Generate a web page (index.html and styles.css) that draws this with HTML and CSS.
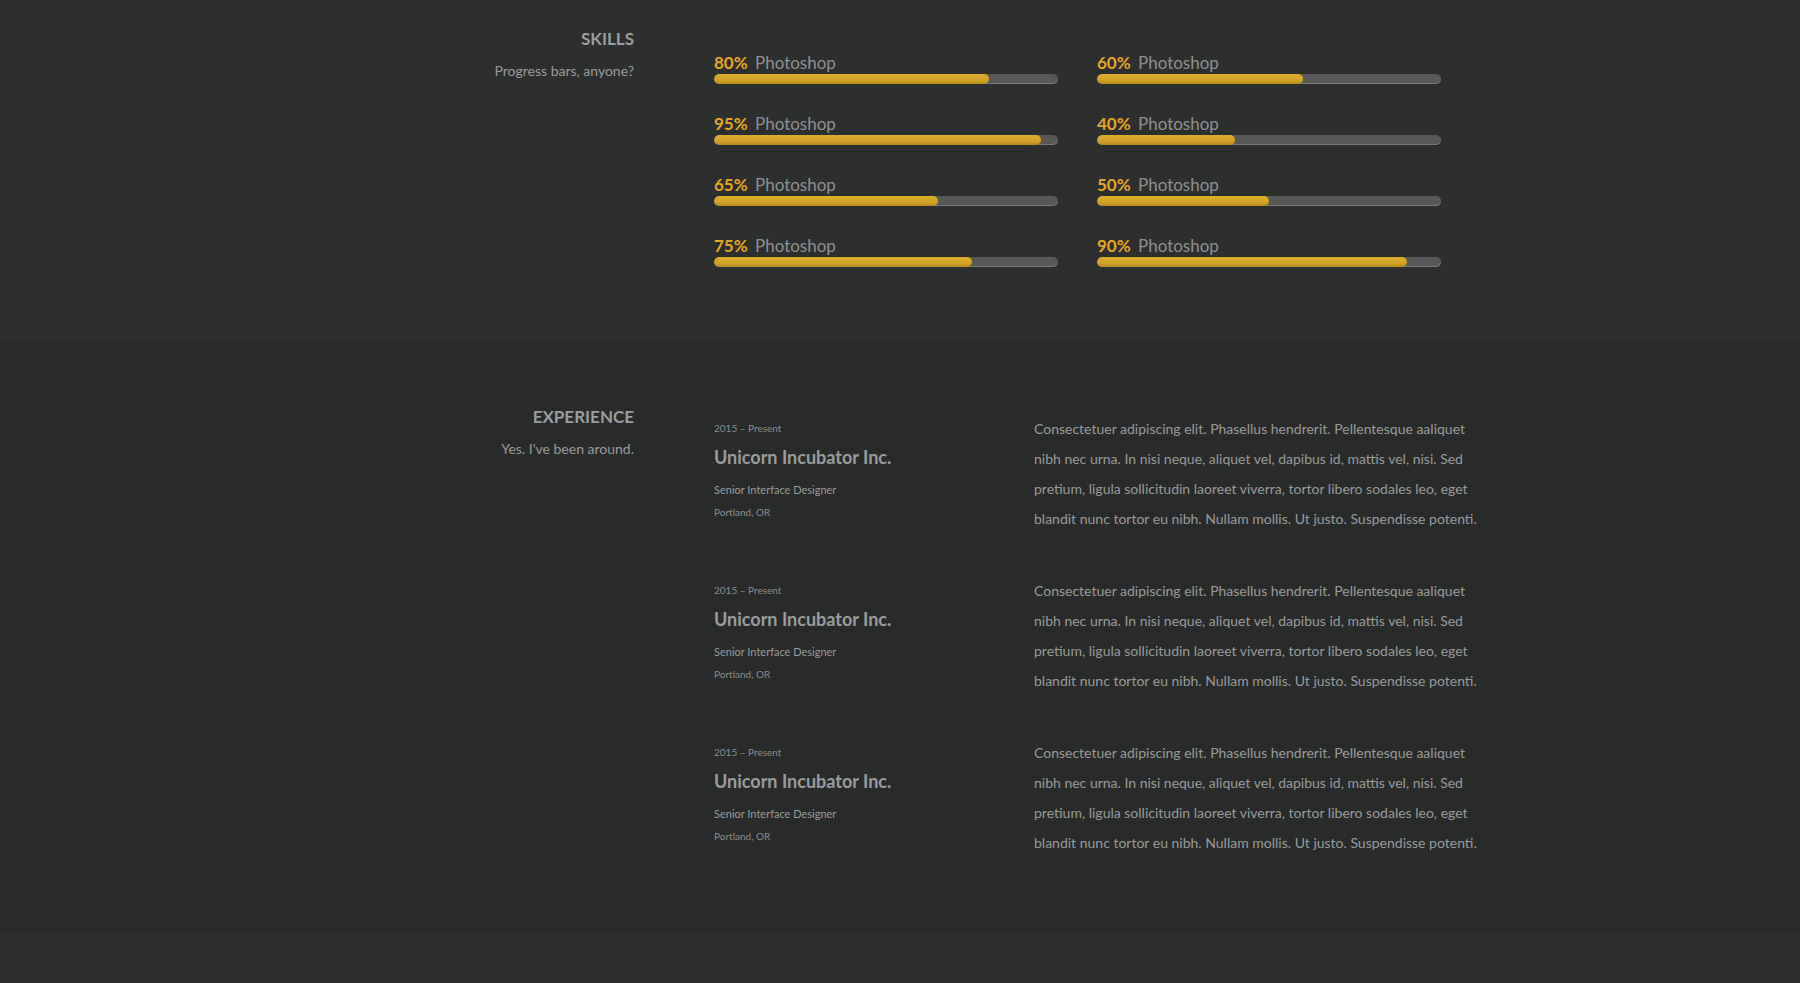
FILE: index.html
```html
<!DOCTYPE html>
<html>
<head>
<meta charset="utf-8">
<link rel="stylesheet" href="styles.css">
</head>
<body>
<section class="section skills">
  <div class="inner">
    <div class="side">
      <h2 class="side-title">SKILLS</h2>
      <p class="side-sub">Progress bars, anyone?</p>
    </div>
    <div class="main skill-grid">
      <div class="skill"><div class="skill-label"><span class="pct">80%</span> Photoshop</div><div class="track"><div class="fill" style="width:80%"></div></div></div>
      <div class="skill"><div class="skill-label"><span class="pct">60%</span> Photoshop</div><div class="track"><div class="fill" style="width:60%"></div></div></div>
      <div class="skill"><div class="skill-label"><span class="pct">95%</span> Photoshop</div><div class="track"><div class="fill" style="width:95%"></div></div></div>
      <div class="skill"><div class="skill-label"><span class="pct">40%</span> Photoshop</div><div class="track"><div class="fill" style="width:40%"></div></div></div>
      <div class="skill"><div class="skill-label"><span class="pct">65%</span> Photoshop</div><div class="track"><div class="fill" style="width:65%"></div></div></div>
      <div class="skill"><div class="skill-label"><span class="pct">50%</span> Photoshop</div><div class="track"><div class="fill" style="width:50%"></div></div></div>
      <div class="skill"><div class="skill-label"><span class="pct">75%</span> Photoshop</div><div class="track"><div class="fill" style="width:75%"></div></div></div>
      <div class="skill"><div class="skill-label"><span class="pct">90%</span> Photoshop</div><div class="track"><div class="fill" style="width:90%"></div></div></div>
    </div>
  </div>
</section>
<section class="section experience">
  <div class="inner">
    <div class="side">
      <h2 class="side-title">EXPERIENCE</h2>
      <p class="side-sub">Yes. I've been around.</p>
    </div>
    <div class="main jobs">
      <div class="job">
        <div class="job-meta">
          <div class="job-date">2015 – Present</div>
          <h3 class="job-company">Unicorn Incubator Inc.</h3>
          <div class="job-role">Senior Interface Designer</div>
          <div class="job-place">Portland, OR</div>
        </div>
        <p class="job-desc">Consectetuer adipiscing elit. Phasellus hendrerit. Pellentesque aaliquet nibh nec urna. In nisi neque, aliquet vel, dapibus id, mattis vel, nisi. Sed pretium, ligula sollicitudin laoreet viverra, tortor libero sodales leo, eget blandit nunc tortor eu nibh. Nullam mollis. Ut justo. Suspendisse potenti.</p>
      </div>
      <div class="job">
        <div class="job-meta">
          <div class="job-date">2015 – Present</div>
          <h3 class="job-company">Unicorn Incubator Inc.</h3>
          <div class="job-role">Senior Interface Designer</div>
          <div class="job-place">Portland, OR</div>
        </div>
        <p class="job-desc">Consectetuer adipiscing elit. Phasellus hendrerit. Pellentesque aaliquet nibh nec urna. In nisi neque, aliquet vel, dapibus id, mattis vel, nisi. Sed pretium, ligula sollicitudin laoreet viverra, tortor libero sodales leo, eget blandit nunc tortor eu nibh. Nullam mollis. Ut justo. Suspendisse potenti.</p>
      </div>
      <div class="job">
        <div class="job-meta">
          <div class="job-date">2015 – Present</div>
          <h3 class="job-company">Unicorn Incubator Inc.</h3>
          <div class="job-role">Senior Interface Designer</div>
          <div class="job-place">Portland, OR</div>
        </div>
        <p class="job-desc">Consectetuer adipiscing elit. Phasellus hendrerit. Pellentesque aaliquet nibh nec urna. In nisi neque, aliquet vel, dapibus id, mattis vel, nisi. Sed pretium, ligula sollicitudin laoreet viverra, tortor libero sodales leo, eget blandit nunc tortor eu nibh. Nullam mollis. Ut justo. Suspendisse potenti.</p>
      </div>
    </div>
  </div>
</section>
<section class="section tail"></section>
</body>
</html>
```

FILE: styles.css
```css
* { box-sizing: border-box; }
html, body { margin: 0; padding: 0; }
body {
  background: #2d2f2e;
  font-family: Lato, "Open Sans", sans-serif;
  color: #999b9b;
}
.section { display: flex; justify-content: center; }
.skills { background: #2d2f2e; padding: 27px 0 75px; }
.experience { background: #292b2a; padding: 63px 0 75px; }
.tail { background: #2d2f2e; height: 60px; }
.inner { width: 1140px; display: flex; gap: 80px; }
.side { width: 304px; flex: none; text-align: right; }
.side-title {
  margin: 0;
  font-size: 17px;
  font-weight: 700;
  line-height: 24px;
  color: #9a9e9f;
}
.side-sub {
  margin: 10px 0 0;
  font-size: 14px;
  line-height: 20px;
  color: #999b9b;
}
.main { flex: 1; }
.skill-grid {
  display: grid;
  grid-template-columns: 344px 344px;
  column-gap: 39px;
  row-gap: 30px;
  padding-top: 26px;
}
.skill-label {
  font-size: 17px;
  line-height: 20px;
  color: #8e9191;
  margin-bottom: 1px;
}
.pct { color: #e5a623; font-weight: 700; margin-right: 3px; }
.track {
  height: 10px;
  border-radius: 5px;
  background: #585858;
  box-shadow: inset 0 -1px 0 #7a7a7a;
  overflow: hidden;
}
.fill {
  height: 100%;
  border-radius: 5px;
  background: linear-gradient(#dcae2c, #d2a227 60%, #b88a1c);
}
.jobs { display: flex; flex-direction: column; gap: 42px; padding-top: 9px; }
.job { display: flex; }
.job-meta { width: 320px; flex: none; }
.job-date { font-size: 10px; line-height: 28px; color: #8a8d8d; }
.job-company {
  margin: 3px 0 0;
  font-size: 18px;
  font-weight: 700;
  line-height: 24px;
  color: #999c9d;
}
.job-role { margin-top: 13px; font-size: 11px; line-height: 16px; color: #999b9b; }
.job-place { margin-top: 7px; font-size: 10px; line-height: 14px; color: #8a8d8d; }
.job-desc {
  margin: 0;
  width: 445px;
  font-size: 14px;
  line-height: 30px;
  color: #999b9b;
}
```
